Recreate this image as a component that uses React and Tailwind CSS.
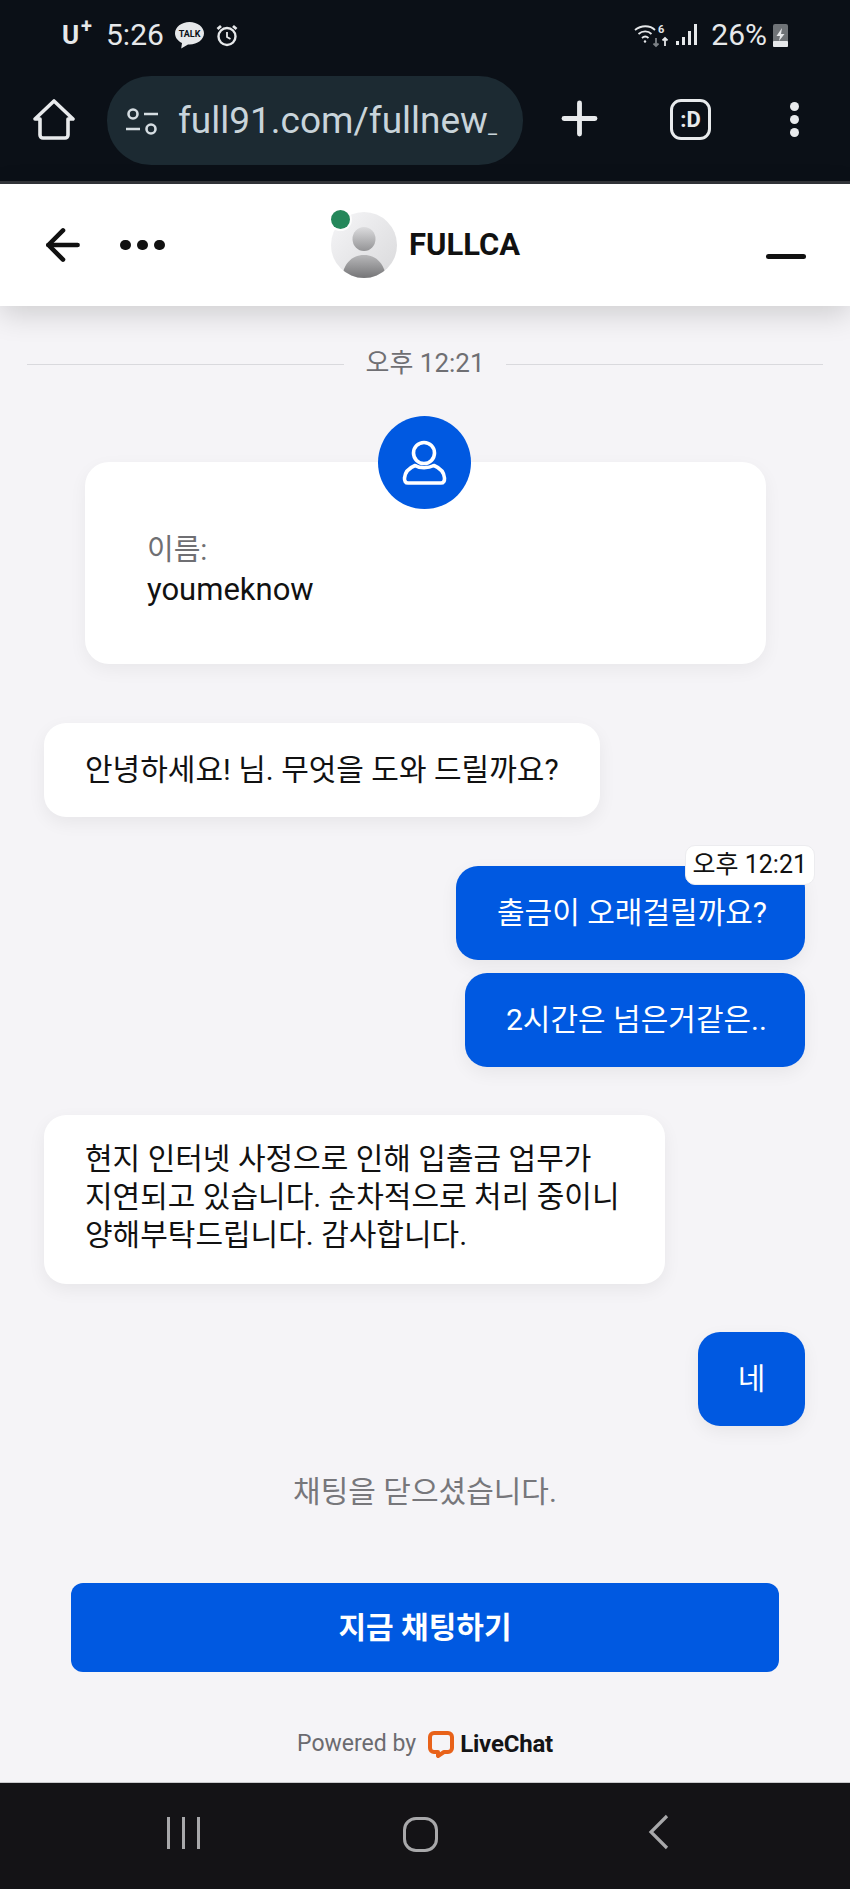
import { ArrowLeft, Plus } from 'lucide-react';

const font = { fontFamily: 'Roboto, "Noto Sans CJK KR", sans-serif' };

function StatusBar() {
  return (
    <div className="h-[70px] flex items-start justify-between pl-[62px] pr-[61px] pt-[17px] text-[#e6e8ea]">
      <div className="flex items-center h-[36px]">
        <span className="w-[36px] text-[26px] font-bold leading-none relative">U<span className="text-[20px] absolute -top-[6px] left-[19px]">+</span></span>
        <span className="ml-[8px] text-[30px] leading-[36px]">5:26</span>
        <svg width="31" height="29" viewBox="0 0 31 29" className="ml-[10px]">
          <path d="M15.5 1C7.5 1 1 6 1 12.3c0 4.2 2.8 7.7 7 9.7l-.8 5.5L14 23.5h1.500c8 0 14.500-5 14.500-11.200S23.500 1 15.500 1z" fill="#e6e8ea" />
          <text x="15.500" y="16" fontSize="9" fontWeight="700" fill="#0b1017" textAnchor="middle">TALK</text>
        </svg>
        <svg width="22" height="23" viewBox="0 0 22 23" fill="none" stroke="#e6e8ea" strokeWidth="2.400" className="ml-[11px]">
          <circle cx="11" cy="12.500" r="8.500" />
          <path d="M11 8v5l3.500 2" strokeWidth="1.800" />
          <path d="M1.500 5 5 2M20.500 5 17 2" strokeWidth="2.800" />
        </svg>
      </div>
      <div className="flex items-center h-[36px]">
        <svg width="36" height="26" viewBox="0 0 36 26" fill="none" stroke="#e6e8ea" strokeWidth="1.800">
          <path d="M1 8c6-5 15-5 20 0M4.500 12c4-3.500 9.500-3.500 13 0M8 16c2-1.800 4.500-1.800 6.500 0" />
          <circle cx="11" cy="19.500" r="1.200" fill="#e6e8ea" stroke="none" />
          <text x="24" y="11" fontSize="11" fontWeight="700" fill="#e6e8ea" stroke="none">6</text>
          <path d="M22 16v8M19.500 21.500l2.500 2.500 2.500-2.500" stroke="#7d8287" />
          <path d="M31 24v-8M28.500 18.500l2.500-2.500 2.500 2.500" />
        </svg>
        <svg width="24" height="24" viewBox="0 0 24 24" fill="#e6e8ea" className="ml-[5px]">
          <rect x="1" y="18" width="3" height="4" />
          <rect x="7" y="14" width="3" height="8" />
          <rect x="13" y="8" width="3" height="14" />
          <rect x="19" y="1" width="3" height="21" />
        </svg>
        <span className="ml-[12px] text-[30px] leading-[36px]">26%</span>
        <svg width="17" height="26" viewBox="0 0 17 26" className="ml-[5px]">
          <rect x="1" y="2" width="15" height="23" rx="2" fill="#6f7377" />
          <rect x="1" y="19" width="15" height="6" rx="1" fill="#e6e8ea" />
          <path d="M10 6 4.500 14H8l-1 5 5.500-7H9z" fill="#e6e8ea" />
        </svg>
      </div>
    </div>
  );
}

function BrowserBar() {
  return (
    <div className="h-[111px] flex items-start">
      <svg width="42" height="42" viewBox="0 0 42 42" fill="none" stroke="#e8eaec" strokeWidth="3.600" strokeLinejoin="round" className="ml-[33px] mt-[29px]">
        <path d="M2 20 21 2l19 18h-5v16a3 3 0 0 1-3 3H10a3 3 0 0 1-3-3V20z" />
      </svg>
      <div className="ml-[32px] mt-[6px] w-[416px] h-[89px] rounded-[44px] bg-[#1c2a32] flex items-center">
        <svg width="34" height="30" viewBox="0 0 34 30" fill="none" stroke="#d5dde2" strokeWidth="2.600" className="ml-[18px] mt-[2px]">
          <circle cx="8" cy="7" r="4.500" />
          <path d="M19 7h14M1 22h14" />
          <circle cx="26" cy="22" r="4.500" />
        </svg>
        <span className="ml-[19px] text-[37px] leading-none text-[#c9d4da] whitespace-nowrap">full91.com/fullnew<span className="text-[20px]">_</span></span>
      </div>
      <Plus className="ml-[30px] mt-[22px] text-[#e8eaec]" size={53} strokeWidth={2.200} />
      <div className="ml-[64px] mt-[29px] w-[41px] h-[41px] rounded-[11px] border-[3.500px] border-[#e8eaec] flex items-center justify-center text-[#e8eaec] text-[22px] font-bold leading-none">:D</div>
      <div className="ml-[79px] mt-[32px] flex flex-col gap-[4px]">
        <span className="w-[9px] h-[9px] rounded-full bg-[#e8eaec]"></span>
        <span className="w-[9px] h-[9px] rounded-full bg-[#e8eaec]"></span>
        <span className="w-[9px] h-[9px] rounded-full bg-[#e8eaec]"></span>
      </div>
    </div>
  );
}

function ChatHeader() {
  return (
    <div className="relative z-10 h-[122px] bg-white flex items-center shadow-[0_8px_28px_rgba(0,0,0,0.16)]">
      <ArrowLeft className="ml-[38px] text-[#111]" size={50} strokeWidth={2.200} />
      <div className="ml-[32px] flex gap-[6px]">
        <span className="w-[11px] h-[10px] rounded-full bg-[#111]"></span>
        <span className="w-[11px] h-[10px] rounded-full bg-[#111]"></span>
        <span className="w-[11px] h-[10px] rounded-full bg-[#111]"></span>
      </div>
      <div className="relative ml-[166px] w-[66px] h-[66px] rounded-full overflow-hidden bg-gradient-to-br from-[#f6f6f8] to-[#d9d9db]">
        <svg width="66" height="66" viewBox="0 0 66 66" className="absolute left-0 top-0">
          <defs>
            <linearGradient id="head" x1="0" y1="0" x2="0" y2="1">
              <stop offset="0" stopColor="#dcdcde" />
              <stop offset="1" stopColor="#949496" />
            </linearGradient>
            <linearGradient id="body" x1="0" y1="0" x2="0" y2="1">
              <stop offset="0" stopColor="#b8b8ba" />
              <stop offset="1" stopColor="#757577" />
            </linearGradient>
          </defs>
          <ellipse cx="33" cy="27" rx="11.500" ry="12" fill="url(#head)" />
          <path d="M11 66c1-13 9-23 22-23s21 10 22 23z" fill="url(#body)" />
        </svg>
      </div>
      <span className="absolute left-[331px] top-[26px] w-[19px] h-[19px] rounded-full bg-[#24875a] ring-2 ring-white/80"></span>
      <span className="ml-[12px] text-[31px] font-bold text-[#111]">FULLCA</span>
      <span className="ml-auto mr-[44px] mt-[22px] w-[40px] h-[5px] rounded-full bg-[#111]"></span>
    </div>
  );
}

function Bubble({ mine, className, children }) {
  const tone = mine ? 'bg-[#0059e1] text-white' : 'bg-white text-[#111]';
  return (
    <div className={`rounded-[22px] px-[41px] text-[30px] leading-[38px] shadow-[0_6px_18px_rgba(0,0,0,0.06)] flex items-center ${tone} ${className}`}>
      <div className="w-full">{children}</div>
    </div>
  );
}

function Messages() {
  return (
    <div className="flex-1 flex flex-col overflow-hidden">
      <div className="mt-[40px] h-[36px] flex items-center pl-[27px] pr-[27px]">
        <div className="flex-1 h-[1px] bg-[#d9d9dd]"></div>
        <span className="mx-[21px] pb-[3px] text-[26px] leading-[30px] text-[#6f6f73]">오후 12:21</span>
        <div className="flex-1 h-[1px] bg-[#d9d9dd]"></div>
      </div>

      <div className="relative mt-[80px] ml-[85px] w-[681px] h-[202px] rounded-[24px] bg-white pt-[68px] pl-[62px] shadow-[0_6px_18px_rgba(0,0,0,0.05)]">
        <div className="absolute -top-[46px] left-[293px] w-[93px] h-[93px] rounded-full bg-[#0059e1] flex items-center justify-center">
          <svg width="46" height="46" viewBox="0 0 46 46" fill="none" stroke="white" strokeWidth="3.600">
            <circle cx="22" cy="13" r="10.500" />
            <path d="M13 25.500C7 28 3 32 2.500 38c-.2 3 1 5 3.500 5h33c2.500 0 3.700-2 3.500-5-.5-6-4.500-10-10.500-12.500" strokeLinecap="round" />
            <path d="M13 25.500c5 3 13 3 19 0" />
          </svg>
        </div>
        <div className="text-[29px] leading-[40px] text-[#6f6f73]">이름:</div>
        <div className="text-[31px] leading-[40px] text-[#111]">youmeknow</div>
      </div>

      <Bubble className="mt-[59px] ml-[44px] w-[556px] h-[94px] whitespace-nowrap">안녕하세요! 님. 무엇을 도와 드릴까요?</Bubble>

      <div className="relative mt-[49px] ml-[456px] w-[349px]">
        <Bubble mine className="h-[94px] text-center whitespace-nowrap">출금이 오래걸릴까요?</Bubble>
        <span className="absolute -top-[21px] right-[-10px] h-[40px] px-[7px] rounded-[10px] bg-white border border-[#ececef] text-[25px] leading-[38px] text-[#111] whitespace-nowrap">오후 12:21</span>
      </div>
      <Bubble mine className="mt-[13px] ml-[465px] w-[340px] h-[94px] text-center whitespace-nowrap">2시간은 넘은거같은..</Bubble>

      <Bubble className="mt-[48px] ml-[44px] w-[621px] h-[169px] pb-[6px] break-keep">현지 인터넷 사정으로 인해 입출금 업무가 지연되고 있습니다. 순차적으로 처리 중이니 양해부탁드립니다. 감사합니다.</Bubble>

      <Bubble mine className="mt-[48px] ml-[698px] w-[107px] h-[94px] text-center !px-0">네</Bubble>

      <div className="mt-[47px] text-center text-[30px] leading-[38px] text-[#77777b]">채팅을 닫으셨습니다.</div>

      <button className="mt-[72px] ml-[71px] w-[708px] h-[89px] rounded-[12px] bg-[#0059e1] text-white text-[30px] font-bold">지금 채팅하기</button>

      <div className="mt-[54px] h-[36px] flex items-center justify-center">
        <span className="text-[23px] text-[#6b6b70]">Powered by</span>
        <svg width="28" height="28" viewBox="0 0 28 28" fill="none" className="ml-[11px]">
          <path d="M7 3h14a4 4 0 0 1 4 4v11a4 4 0 0 1-4 4h-4l-6 4v-4H7a4 4 0 0 1-4-4V7a4 4 0 0 1 4-4z" stroke="#e8621a" strokeWidth="4" strokeLinejoin="round" />
        </svg>
        <span className="ml-[5px] text-[24px] font-bold text-[#141416] tracking-[-0.2px]">LiveChat</span>
      </div>
    </div>
  );
}

function NavBar() {
  return (
    <div className="h-[107px] bg-[#141316] border-t border-[#c9c9cc] relative flex items-center justify-center pb-[4px]">
      <div className="absolute left-[167px] top-[34px] flex gap-[12px]">
        <span className="w-[3px] h-[32px] bg-[#a8a8aa]"></span>
        <span className="w-[3px] h-[32px] bg-[#a8a8aa]"></span>
        <span className="w-[3px] h-[32px] bg-[#a8a8aa]"></span>
      </div>
      <div className="mr-[9px] w-[35px] h-[35px] rounded-[13px] border-[3px] border-[#a8a8aa]"></div>
      <svg width="22" height="36" viewBox="0 0 22 36" fill="none" stroke="#a8a8aa" strokeWidth="3.200" className="absolute left-[648px] top-[31px]">
        <path d="M19 2 3 18l16 16" />
      </svg>
    </div>
  );
}

export default function App() {
  return (
    <div style={font} className="w-[850px] h-[1889px] flex flex-col bg-[#f5f4f7] overflow-hidden">
      <div className="h-[184px] bg-[#0b1017] border-b-[3px] border-[#33363b]">
        <StatusBar />
        <BrowserBar />
      </div>
      <ChatHeader />
      <Messages />
      <NavBar />
    </div>
  );
}
